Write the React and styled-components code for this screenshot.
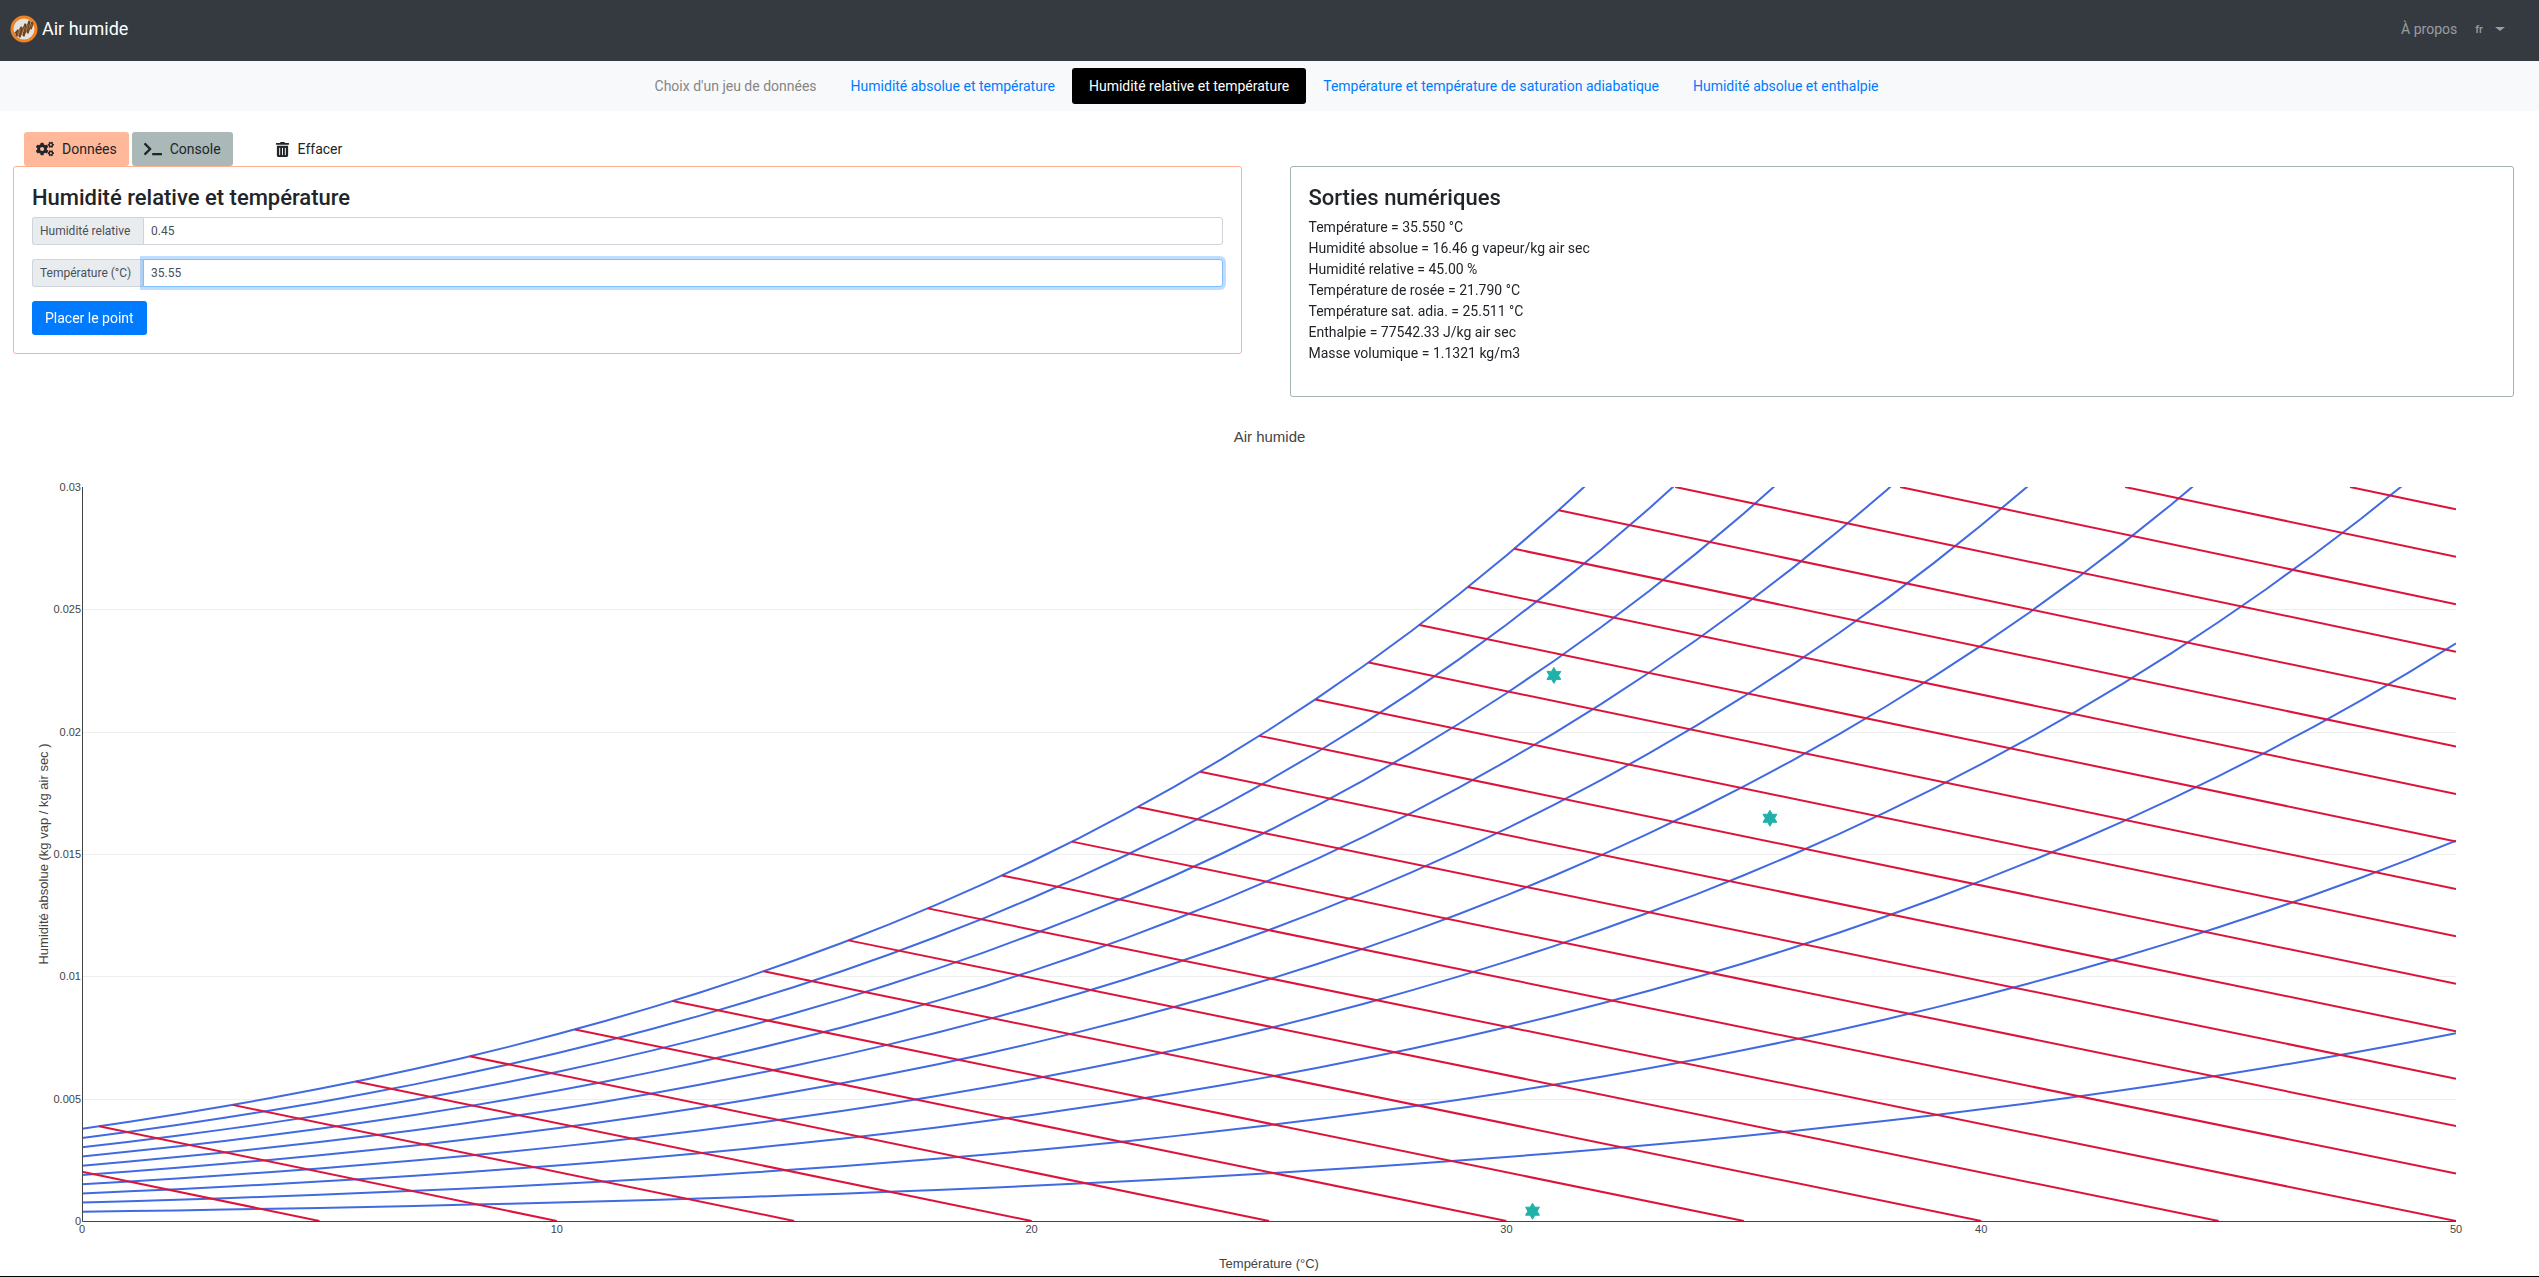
import React from "react";
import styled, { createGlobalStyle, css } from "styled-components";
import { FaCogs, FaTerminal, FaTrashAlt } from "react-icons/fa";

const sans = `Roboto, "Liberation Sans", sans-serif`;

const GlobalStyle = createGlobalStyle`
  *, *::before, *::after { box-sizing: border-box; }
  body {
    margin: 0;
    background: #fff;
    color: #212529;
    font: 400 14px/21px ${sans};
  }
`;

const Navbar = styled.header`
  display: flex;
  justify-content: space-between;
  align-items: flex-start;
  height: 61px;
  padding: 11px 34px 0 10px;
  background: #343a40;
`;

const Brand = styled.a`
  display: flex;
  align-items: center;
  gap: 4px;
  color: #fff;
  font-size: 18px;
  line-height: 36px;
  height: 36px;
  text-decoration: none;
`;

const NavLinks = styled.nav`
  display: flex;
  align-items: center;
  gap: 18px;
  height: 36px;
`;

const NavLink = styled.a`
  color: rgba(255, 255, 255, 0.5);
  text-decoration: none;
`;

const LangButton = styled.button`
  display: flex;
  align-items: center;
  gap: 12px;
  padding: 0;
  border: 0;
  background: none;
  color: rgba(255, 255, 255, 0.5);
  font: 500 11px/21px ${sans};

  &::after {
    content: "";
    border-top: 4px solid;
    border-left: 5px solid transparent;
    border-right: 5px solid transparent;
  }
`;

const DatasetBar = styled.nav`
  display: flex;
  justify-content: center;
  align-items: center;
  height: 50px;
  padding-right: 6px;
  background: #f8f9fa;
`;

const datasetItem = css`
  padding: 7px 17px;
  border-radius: 3px;
  line-height: 22px;
`;

const DatasetLabel = styled.span`
  ${datasetItem}
  color: #868686;
`;

const DatasetLink = styled.a`
  ${datasetItem}
  color: ${(p) => (p.$active ? "#fff" : "#007bff")};
  background: ${(p) => (p.$active ? "#000" : "transparent")};
  text-decoration: none;
`;

const Columns = styled.main`
  display: grid;
  grid-template-columns: 1fr 1fr;
  align-items: start;
  padding-top: 21px;
`;

const InputColumn = styled.div`
  padding: 0 28px 0 13px;
`;

const OutputColumn = styled.div`
  padding: 34px 25px 0 20px;
`;

const Tabs = styled.div`
  display: flex;
  padding-left: 11px;
  height: 34px;
`;

const TabButton = styled.button`
  display: flex;
  align-items: center;
  gap: 8px;
  height: 34px;
  padding: 0 12px;
  margin-right: ${(p) => p.$gapAfter || 0}px;
  border: 0;
  border-radius: 3px;
  background: ${(p) => p.$color || "transparent"};
  color: #212529;
  font: 400 14px/21px ${sans};
`;

const Panel = styled.section`
  min-height: ${(p) => p.$min}px;
  padding: 18px 18px 17px;
  border: 1px solid ${(p) => p.$border};
  border-radius: 3px;
`;

const Title = styled.h2`
  margin: 0 0 6px;
  font: 500 22px/26px ${sans};
`;

const Form = styled.form`
  margin: 0;
`;

const InputGroup = styled.div`
  display: flex;
  height: 28px;
  margin-bottom: 14px;
`;

const InputLabel = styled.label`
  display: flex;
  align-items: center;
  flex: none;
  width: 111px;
  padding: 0 7px;
  border: 1px solid #ced4da;
  border-right-width: 0;
  border-radius: 3px 0 0 3px;
  background: #e9ecef;
  color: #495057;
  font-size: 12px;
  line-height: 18px;
  white-space: nowrap;
`;

const Input = styled.input`
  flex: 1;
  min-width: 0;
  padding: 0 7px;
  border: 1px solid #ced4da;
  border-radius: 0 3px 3px 0;
  background: #fff;
  color: #495057;
  font: 400 12px/18px ${sans};
  outline: none;

  &:focus {
    border-color: #80bdff;
    box-shadow: 0 0 0 3px rgba(0, 123, 255, 0.25);
  }
`;

const SubmitButton = styled.button`
  height: 34px;
  padding: 0 13px;
  border: 0;
  border-radius: 3px;
  background: #007bff;
  color: #fff;
  font: 400 14px/21px ${sans};
`;

const Results = styled.div`
  line-height: 21px;
`;

const ChartArea = styled.section`
  border-bottom: 1px solid #000;
`;

const ChartSvg = styled.svg`
  display: block;
  width: 100%;
  height: auto;
  font-family: "Liberation Sans", Arial, sans-serif;
  fill: #444;
`;

/* ---- humid air model ---- */

const PRESSURE = 101325;
const MAX_T = 50;
const MAX_W = 0.03;

const saturationPressure = (t) =>
  611.21 * Math.exp((18.678 - t / 234.5) * (t / (257.14 + t)));

const humidityRatio = (t, phi) => {
  const pv = phi * saturationPressure(t);
  return (0.622 * pv) / (PRESSURE - pv);
};

const isenthalpicHumidity = (t, h) => (h - 1.006 * t) / (2501 + 1.86 * t);

const isenthalpicTemperature = (w, h) => (h - 2501 * w) / (1.006 + 1.86 * w);

const saturationTemperature = (h) => {
  let low = 0;
  let high = MAX_T;
  for (let i = 0; i < 40; i += 1) {
    const mid = (low + high) / 2;
    if (humidityRatio(mid, 1) < isenthalpicHumidity(mid, h)) low = mid;
    else high = mid;
  }
  return low;
};

/* ---- chart ---- */

const VIEW = { width: 2539, height: 879 };
const PLOT = { left: 82, right: 2456, top: 90, bottom: 824 };
const sx = (t) => PLOT.left + (t / MAX_T) * (PLOT.right - PLOT.left);
const sy = (w) => PLOT.bottom - (w / MAX_W) * (PLOT.bottom - PLOT.top);

const T_STEPS = Array.from({ length: MAX_T + 1 }, (_, i) => i);
const toPath = (points) =>
  points.map(([t, w], i) => `${i ? "L" : "M"}${sx(t).toFixed(2)},${sy(w).toFixed(2)}`).join("");

const humidityCurves = Array.from({ length: 10 }, (_, i) =>
  toPath(T_STEPS.map((t) => [t, humidityRatio(t, (i + 1) / 10)]))
);

const enthalpyLines = Array.from({ length: 25 }, (_, i) => {
  const h = 1.006 * 5 * (i + 1);
  const start = Math.max(saturationTemperature(h), isenthalpicTemperature(MAX_W, h));
  const end = Math.min(5 * (i + 1), MAX_T);
  return toPath([
    [start, isenthalpicHumidity(start, h)],
    [end, isenthalpicHumidity(end, h)],
  ]);
});

const yTicks = [0, 0.005, 0.01, 0.015, 0.02, 0.025, 0.03];
const xTicks = [0, 10, 20, 30, 40, 50];
const markers = [
  [31, 0.0223],
  [35.55, 0.01646],
  [30.55, 0.0004],
];

const hexagram = (r) => {
  const x = (r * Math.sqrt(3)) / 2;
  const x2 = x / 3;
  return `M${-x},${r / 2}H${-x2}L0,${r}L${x2},${r / 2}H${x}L${2 * x2},0L${x},${-r / 2}H${x2}L0,${-r}L${-x2},${-r / 2}H${-x}L${-2 * x2},0Z`;
};

function PsychrometricChart() {
  return (
    <ChartSvg viewBox={`0 0 ${VIEW.width} ${VIEW.height}`} role="img" aria-label="Air humide">
      <defs>
        <clipPath id="plot">
          <rect
            x={PLOT.left}
            y={PLOT.top}
            width={PLOT.right - PLOT.left}
            height={PLOT.bottom - PLOT.top}
          />
        </clipPath>
      </defs>
      <text x={VIEW.width / 2} y="45" textAnchor="middle" fontSize="15">Air humide</text>
      <g stroke="#eee">
        {yTicks.slice(1, -1).map((w) => (
          <path key={w} d={`M${PLOT.left},${Math.round(sy(w)) + 0.5}H${PLOT.right}`} />
        ))}
      </g>
      <g clipPath="url(#plot)" fill="none" strokeWidth="2">
        <g stroke="#4169e1">{humidityCurves.map((d) => <path key={d} d={d} />)}</g>
        <g stroke="#dc143c">{enthalpyLines.map((d) => <path key={d} d={d} />)}</g>
      </g>
      <path
        d={`M${PLOT.left + 0.5},${PLOT.top}V${PLOT.bottom + 0.5}H${PLOT.right}`}
        fill="none"
        stroke="#444"
      />
      {markers.map(([t, w]) => (
        <path
          key={t}
          d={hexagram(8)}
          fill="#20b2aa"
          stroke="#20b2aa"
          transform={`translate(${sx(t)},${sy(w)})`}
        />
      ))}
      <g fontSize="11" textAnchor="end">
        {yTicks.map((w) => <text key={w} x={PLOT.left - 1} y={sy(w) + 4}>{w}</text>)}
      </g>
      <g fontSize="11" textAnchor="middle">
        {xTicks.map((t) => <text key={t} x={sx(t)} y={PLOT.bottom + 12}>{t}</text>)}
      </g>
      <text x={(PLOT.left + PLOT.right) / 2} y="871" textAnchor="middle" fontSize="13">
        Température (°C)
      </text>
      <text transform="translate(48,457) rotate(-90)" textAnchor="middle" fontSize="13">
        Humidité absolue (kg vap / kg air sec )
      </text>
    </ChartSvg>
  );
}

const Logo = () => (
  <svg width="28" height="28" viewBox="0 0 28 28" aria-hidden="true">
    <circle cx="14" cy="14" r="12" fill="#e4e2e0" stroke="#ee8222" strokeWidth="3" />
    <g fill="none" strokeLinecap="round" strokeLinejoin="round">
      <path
        d="M5 18L8 15L6 20L7 21L11 12L12 13L9 21L10 22L15 9L16 10L13 20L14 21L19 6L20 7L17 17L18 18L22 7L23 9L21 14"
        stroke="#6b3f18"
        strokeWidth="1.3"
      />
      <path d="M8 19L10 15M12 18L14 13M16 16L18 10" stroke="#b57a45" strokeWidth="0.7" />
    </g>
  </svg>
);

const datasets = [
  "Humidité absolue et température",
  "Humidité relative et température",
  "Température et température de saturation adiabatique",
  "Humidité absolue et enthalpie",
];

const outputs = [
  "Température = 35.550 °C",
  "Humidité absolue = 16.46 g vapeur/kg air sec",
  "Humidité relative = 45.00 %",
  "Température de rosée = 21.790 °C",
  "Température sat. adia. = 25.511 °C",
  "Enthalpie = 77542.33 J/kg air sec",
  "Masse volumique = 1.1321 kg/m3",
];

export default function App() {
  return (
    <>
      <GlobalStyle />
      <Navbar>
        <Brand href="#">
          <Logo />
          Air humide
        </Brand>
        <NavLinks>
          <NavLink href="#about">À propos</NavLink>
          <LangButton type="button">fr</LangButton>
        </NavLinks>
      </Navbar>
      <DatasetBar>
        <DatasetLabel>Choix d'un jeu de données</DatasetLabel>
        {datasets.map((name, i) => (
          <DatasetLink key={name} href="#" $active={i === 1}>{name}</DatasetLink>
        ))}
      </DatasetBar>
      <Columns>
        <InputColumn>
          <Tabs>
            <TabButton type="button" $color="#ffb899" $gapAfter={3}>
              <FaCogs size={18} />
              Données
            </TabButton>
            <TabButton type="button" $color="#aab8b8" $gapAfter={30}>
              <FaTerminal size={18} />
              Console
            </TabButton>
            <TabButton type="button">
              <FaTrashAlt size={15} />
              Effacer
            </TabButton>
          </Tabs>
          <Panel $border="#ffb090" $min={188}>
            <Form onSubmit={(e) => e.preventDefault()}>
              <Title>Humidité relative et température</Title>
              <InputGroup>
                <InputLabel htmlFor="phi">Humidité relative</InputLabel>
                <Input id="phi" defaultValue="0.45" />
              </InputGroup>
              <InputGroup>
                <InputLabel htmlFor="temp">Température (°C)</InputLabel>
                <Input id="temp" defaultValue="35.55" autoFocus />
              </InputGroup>
              <SubmitButton type="submit">Placer le point</SubmitButton>
            </Form>
          </Panel>
        </InputColumn>
        <OutputColumn>
          <Panel $border="#9fb3b1" $min={231}>
            <Title>Sorties numériques</Title>
            <Results>
              {outputs.map((line) => <div key={line}>{line}</div>)}
            </Results>
          </Panel>
        </OutputColumn>
      </Columns>
      <ChartArea>
        <PsychrometricChart />
      </ChartArea>
    </>
  );
}
